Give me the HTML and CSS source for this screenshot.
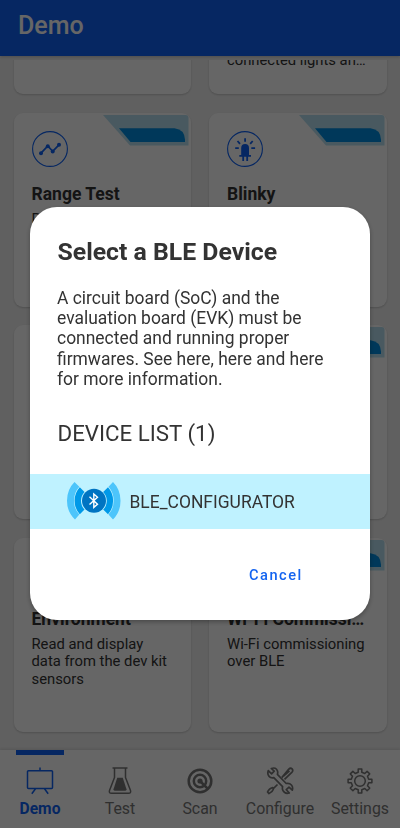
FILE: index.html
```html
<!DOCTYPE html>
<html lang="en">
<head>
<meta charset="utf-8">
<meta name="viewport" content="width=device-width, initial-scale=1">
<title>Demo</title>
<link rel="stylesheet" href="styles.css">
</head>
<body>
<svg width="0" height="0" class="defs" aria-hidden="true">
  <symbol id="ribbon" viewBox="0 0 86 31">
    <path class="ribbon-light" d="M0 0H82.500Q85.500 0 85.500 3V30.500H27Z"/>
    <path class="ribbon-dark" d="M16 13.300H71.500Q81.500 14.500 82 24.500V27H27.500Z"/>
  </symbol>
</svg>
<div class="app">
  <header class="topbar">Demo</header>
  <main class="content">
    <div class="grid">
      <article class="card"></article>
      <article class="card"><p class="desc desc-last">connected lights an…</p></article>

      <article class="card">
        <svg class="ribbon"><use href="#ribbon"/></svg>
        <svg class="badge" viewBox="0 0 36 36"><circle class="ring" cx="18" cy="18" r="17.400"/><path class="trend" d="M9 22.200 15.800 15 20.700 20.300 27 13.800"/><g class="solid"><circle cx="9" cy="22.300" r="2"/><circle cx="15.800" cy="15.200" r="2"/><circle cx="20.700" cy="20.400" r="2"/><circle cx="27" cy="13.800" r="2"/></g></svg>
        <h2>Range Test</h2>
        <p class="desc">Perform range</p>
      </article>
      <article class="card">
        <svg class="ribbon"><use href="#ribbon"/></svg>
        <svg class="badge" viewBox="0 0 36 36"><circle class="ring" cx="18" cy="18" r="17.400"/><path class="solid" d="M14.200 24V17a3.900 3.900 0 0 1 7.800 0V24h2v1.800h-2.900V30h-1.800v-4.200h-2.200V30h-1.800v-4.200h-3V24Z"/><path class="rays" d="M18.100 7.200v3.600M10.500 10l2.500 2.900M25.700 10l-2.500 2.900M8.200 17.200h3.600M24.300 17.200h3.800"/></svg>
        <h2>Blinky</h2>
      </article>

      <article class="card"></article>
      <article class="card"><svg class="ribbon"><use href="#ribbon"/></svg></article>

      <article class="card">
        <div class="badge"></div>
        <h2>Environment</h2>
        <p class="desc">Read and display data from the dev kit sensors</p>
      </article>
      <article class="card">
        <svg class="ribbon"><use href="#ribbon"/></svg>
        <div class="badge"></div>
        <h2>Wi-Fi Commissi…</h2>
        <p class="desc">Wi-Fi commissioning over BLE</p>
      </article>
    </div>
  </main>
  <nav class="tabs">
    <a class="tab active">
      <svg viewBox="0 0 28 28"><path d="M14 .500V3.500M2.500 3.700h23a1 1 0 0 1 1 1V20.500a1 1 0 0 1-1 1h-23a1 1 0 0 1-1-1V4.700a1 1 0 0 1 1-1ZM9.500 21.700 5.800 26.800M18.500 21.700 22.200 26.800"/></svg>
      <span>Demo</span>
    </a>
    <a class="tab">
      <svg viewBox="0 0 28 28"><path d="M6.500 1h15M8.500 1v9.500L3.500 23.500q-.8 2.800 2 2.800h17q2.800 0 2-2.800L19.500 10.500V1"/><path class="fill" d="M11.200 10.800h5.600l3.700 11.500q0 1.500-1.500 1.500H9q-1.500 0-1.500-1.500Z"/></svg>
      <span>Test</span>
    </a>
    <a class="tab">
      <svg viewBox="0 0 28 28"><g class="scan"><circle cx="14" cy="14" r="11.300"/><circle cx="14" cy="14" r="6.200"/><path d="M14 14 21.500 21.500"/></g><circle class="fill" cx="14" cy="14" r="2.600"/></svg>
      <span>Scan</span>
    </a>
    <a class="tab">
      <svg class="tools" viewBox="0 0 28 28"><path d="M15.800 10.600 22.600 2.300Q24.500.4 26.100 1.900 27.500 3.500 25.800 5.300L18.500 12.300M17.500 9.200 23.500 3.800M11.500 17.500 7.300 21.600 6.700 20.500Q3 21.500 1.500 25L3 26.600Q6.500 25 7.500 22"/><path d="M2.300 3.600 5.600 6.800 8.200 4.200 5.300 1.500Q10-.2 11.500 4q.5 1.800-.1 3.300L20.200 16.500q3.200-.8 5.200 1.500 1.900 2.300.9 5.200L23 20.100 20.300 22.700 23.300 26q-4.500 1.200-6.300-2.300-1-1.800-.4-4L7.800 10.700q-3 .7-4.700-1.300Q1 7.100 2.300 3.600Z"/></svg>
      <span>Configure</span>
    </a>
    <a class="tab">
      <svg viewBox="0 0 28 28"><path d="M12.200 1.200h3.600v3.200l3 1.200 2.300-2.200 2.600 2.600-2.200 2.300 1.200 3h3.200v3.600h-3.200l-1.200 3 2.200 2.300-2.600 2.600-2.300-2.200-3 1.200V25h-3.600v-3.200l-3-1.200-2.300 2.200-2.600-2.600 2.200-2.300-1.200-3H2.100v-3.600h3.200l1.200-3L4.300 6l2.600-2.600 2.300 2.200 3-1.200Z" transform="translate(0 .9)"/><circle cx="14" cy="14" r="5.300"/></svg>
      <span>Settings</span>
    </a>
  </nav>
</div>
<div class="scrim">
  <section class="dialog" role="dialog">
    <h1>Select a BLE Device</h1>
    <p class="message">A circuit board (SoC) and the<br>evaluation board (EVK) must be<br>connected and running proper<br>firmwares. See here, here and here<br>for more information.</p>
    <h3>DEVICE LIST (1)</h3>
    <div class="device">
      <svg viewBox="0 0 54 38" class="ble"><path class="outer" d="M7.500 0 12.300 4.800Q7 10.500 7 18.700T12.300 32.500L8 37.500Q0 30 0 18.700T7.500 0ZM46 0 41.500 4.800Q46.700 10.500 46.700 18.700T41.500 32.500L46 37.500Q53.500 30 53.500 18.700T46 0Z"/><path class="inner" d="M12.800 5.300 17.500 9.900Q14 13.500 14 18.700T17.500 27.600L12.800 32.200Q7.600 26.500 7.600 18.700T12.800 5.300ZM41 5.300 36.200 9.900Q39.800 13.500 39.800 18.700T36.200 27.600L41 32.200Q46.100 26.500 46.100 18.700T41 5.300Z"/><circle cx="27" cy="18.700" r="12"/><path class="rune" d="M22.500 14.800 30.500 22.200 26.800 25.400V12L30.500 15.300 22.500 22.600"/></svg>
      <span>BLE_CONFIGURATOR</span>
    </div>
    <button class="cancel">Cancel</button>
  </section>
</div>
</body>
</html>
```
FILE: styles.css
```css
* { box-sizing: border-box; margin: 0; padding: 0; }
body { font-family: Roboto, "Liberation Sans", sans-serif; color: #333; }
.defs { position: absolute; }
.app { display: flex; flex-direction: column; height: 828px; background: #f0f0f0; overflow: hidden; }
.topbar { flex: none; height: 56px; margin-bottom: 4px; padding: 10px 18px; background: #0f62f5; color: #fff; font-size: 25px; font-weight: 500; line-height: 32px; box-shadow: 0 1px 3px rgba(0,0,0,.2); }
.content { flex: none; height: 690px; padding: 0 13.500px 18.500px 13.500px; overflow: hidden; display: flex; align-items: flex-end; }
.grid { flex: 1; display: grid; grid-template-columns: 177.500px 177.500px; grid-auto-rows: 194px; gap: 18.500px 18px; }
.card { position: relative; padding: 18px 0 0 18px; border-radius: 9px; background: #fff; box-shadow: 0 1px 2px rgba(0,0,0,.18); }
.ribbon { position: absolute; top: 2px; right: 2px; width: 86px; height: 31px; }
.ribbon-light { fill: #b6dfef; }
.ribbon-dark { fill: #008de0; }
.badge { display: block; width: 36px; height: 36px; }
.ring { fill: none; stroke: #0f62f5; stroke-width: 1.100; }
.trend, .rays { fill: none; stroke: #0f62f5; stroke-width: 1.800; }
.solid { fill: #0f62f5; }
.card h2 { margin-top: 16px; font-size: 17.500px; font-weight: 700; line-height: 22px; white-space: nowrap; }
.desc { margin-top: 6px; width: 142px; font-size: 14.800px; line-height: 17.500px; color: #333; }
.desc-last { margin-top: 134px; white-space: nowrap; }
.tabs { flex: none; height: 78px; display: grid; grid-template-columns: repeat(5, 80px); background: #fff; box-shadow: 0 -1px 3px rgba(0,0,0,.12); }
.tab { position: relative; display: flex; flex-direction: column; align-items: center; padding-top: 17px; font-size: 15.900px; line-height: 20px; color: #777; white-space: nowrap; }
.tab svg { width: 28px; height: 28px; margin-bottom: 4px; fill: none; stroke: currentColor; stroke-width: 1.500; stroke-linejoin: round; }
.tab .fill { fill: currentColor; stroke: none; }
.tab .scan { stroke-width: 2.500; }
.tab .tools { stroke-width: 1.700; }
.tab.active { color: #0f62f5; font-weight: 700; }
.tab.active span { font-size: 15.600px; }
.tab.active::before { content: ""; position: absolute; top: 0; left: 16px; width: 48px; height: 4.500px; background: #0f62f5; }
.scrim { position: fixed; inset: 0; display: flex; align-items: flex-start; padding: 206.500px 30px 0 30px; background: rgba(0,0,0,.6); }
.dialog { width: 340px; height: 413px; border-radius: 27px; background: #fff; box-shadow: 0 2px 5px rgba(0,0,0,.3); padding-top: 29.500px; display: flex; flex-direction: column; }
h1 { padding-left: 27.500px; font-size: 24.800px; font-weight: 700; line-height: 32px; white-space: nowrap; }
.message { margin-top: 19.700px; padding-left: 27px; font-size: 17.450px; line-height: 20.300px; white-space: nowrap; }
h3 { margin-top: 29.300px; padding-left: 27.500px; font-size: 22.300px; font-weight: 400; line-height: 30px; white-space: nowrap; }
.device { margin-top: 25.500px; height: 55.500px; display: flex; align-items: center; padding-left: 37px; background: #bff2ff; font-size: 17.450px; white-space: nowrap; }
.ble { width: 54px; height: 38px; margin: -2px 8.500px 0 0; fill: #0074c2; }
.outer { fill: #4dc5fb; }
.inner { fill: #0099e8; }
.rune { fill: none; stroke: #fff; stroke-width: 1.400; }
.cancel { align-self: flex-start; margin: 35.800px 0 0 219px; border: 0; background: none; font: 500 14.600px/20px Roboto, sans-serif; letter-spacing: 1.500px; color: #1464f0; }
```
